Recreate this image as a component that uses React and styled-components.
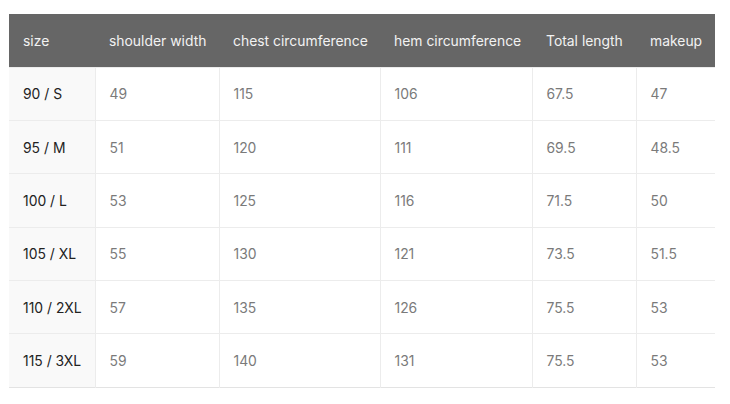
import React from "react";
import styled, { createGlobalStyle } from "styled-components";

const Global = createGlobalStyle`
  body { margin: 0; background: #fff; font-family: Inter, "Noto Sans", sans-serif; }
`;

const Wrap = styled.div`
  padding: 14px 15px 0 9px;
`;

const Table = styled.table`
  border-collapse: collapse;
  table-layout: fixed;
  width: 706px;
  font-size: 13.9px;
  border-bottom: 1px solid #e3e3e3;
`;

const Head = styled.th`
  background: #666666;
  color: #f2f2f2;
  font-weight: 400;
  text-align: left;
  height: 53px;
  padding: 2px 0 0 14px;
  white-space: nowrap;
  box-sizing: border-box;
`;

const Cell = styled.td`
  height: 53.4px;
  padding: 1px 0 0 14px;
  box-sizing: border-box;
  text-align: left;
  color: ${(p) => (p.$key ? "#222" : "#7a7a7a")};
  background: ${(p) => (p.$key ? "#f9f9f9" : "#fff")};
  border-top: 1px solid #ececec;
  border-left: ${(p) => (p.$first ? "none" : "1px solid #ececec")};
  white-space: nowrap;
`;

const widths = [86, 124, 161, 152, 104, 79];
const headers = ["size", "shoulder width", "chest circumference", "hem circumference", "Total length", "makeup"];
const rows = [
  ["90 / S", "49", "115", "106", "67.5", "47"],
  ["95 / M", "51", "120", "111", "69.5", "48.5"],
  ["100 / L", "53", "125", "116", "71.5", "50"],
  ["105 / XL", "55", "130", "121", "73.5", "51.5"],
  ["110 / 2XL", "57", "135", "126", "75.5", "53"],
  ["115 / 3XL", "59", "140", "131", "75.5", "53"],
];

export default function App() {
  return (
    <Wrap>
      <Global />
      <Table>
        <colgroup>
          {widths.map((w, i) => (
            <col key={i} style={{ width: w }} />
          ))}
        </colgroup>
        <thead>
          <tr>
            {headers.map((h) => (
              <Head key={h}>{h}</Head>
            ))}
          </tr>
        </thead>
        <tbody>
          {rows.map((r, ri) => (
            <tr key={ri}>
              {r.map((c, ci) => (
                <Cell key={ci} $key={ci === 0} $first={ci === 0}>
                  {c}
                </Cell>
              ))}
            </tr>
          ))}
        </tbody>
      </Table>
    </Wrap>
  );
}
